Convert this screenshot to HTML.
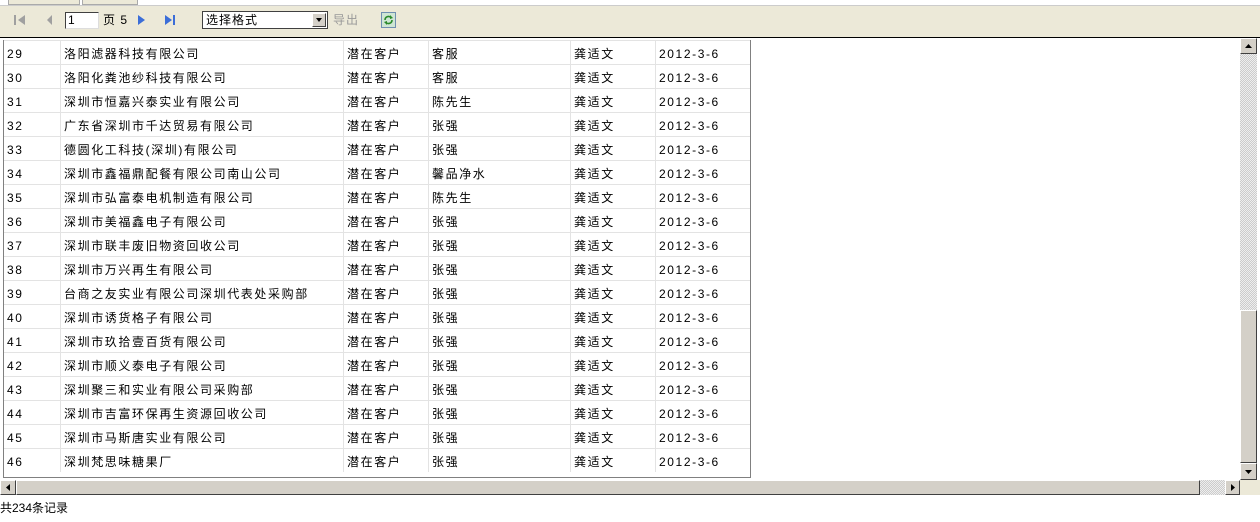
<!DOCTYPE html>
<html><head><meta charset="utf-8"><style>
*{margin:0;padding:0;box-sizing:border-box}
body{width:1260px;height:522px;background:#fff;position:relative;overflow:hidden;font-family:"Liberation Sans","Noto Sans CJK SC","WenQuanYi Zen Hei",sans-serif;font-size:12px;color:#000}
.abs{position:absolute}
#tb{left:0;top:5px;width:1260px;height:33px;background:#ece9d8;border-bottom:1px solid #000;border-top:1px solid #ccc}
.tab{top:0;height:5px;background:#ece9d8;border:1px solid #aaa;border-top:none}
#grid{left:3px;top:40px;width:748px;height:438px;border-left:1px solid #808080;border-right:1px solid #808080;border-bottom:1px solid #808080}
.row{position:absolute;left:0;height:24px;width:746px;border-top:1px solid #e3e3e3}
.c{position:absolute;top:0;height:23px;line-height:27px;padding-left:3px;border-left:1px solid #e3e3e3;white-space:nowrap;letter-spacing:1.6px}
.chk{background-color:#eee;background-image:linear-gradient(45deg,#ccc 25%,transparent 25%,transparent 75%,#ccc 75%),linear-gradient(45deg,#ccc 25%,transparent 25%,transparent 75%,#ccc 75%);background-size:2px 2px;background-position:0 0,1px 1px}
.btn{background:#d4d0c8;border:1px solid;border-color:#fff #404040 #404040 #fff}
</style></head><body>
<div class="abs tab" style="left:8px;width:72px"></div>
<div class="abs tab" style="left:82px;width:56px"></div>
<div id="tb" class="abs"></div>
<svg class="abs" style="left:12px;top:12px" width="180" height="16">
<g fill="#a0a0a0"><rect x="2" y="3" width="2" height="10"/><polygon points="13,3 6,8 13,13"/><polygon points="40,3 35,8 40,13"/></g>
<g fill="#3c6ed8"><polygon points="126,3 133,8 126,13"/><polygon points="153,3 160,8 153,13"/><rect x="161" y="3" width="2" height="10"/></g>
</svg>
<div class="abs" style="left:65px;top:12px;width:34px;height:17px;background:#fff;border:1px solid #7f9db9;border-color:#404040 #ddd #ddd #404040;font-size:12px;line-height:15px;padding-left:2px">1</div>
<div class="abs" style="left:103px;top:12px;line-height:16px;letter-spacing:1px">页 5</div>
<div class="abs" style="left:202px;top:11px;width:126px;height:18px;background:#fff;border:1px solid #404040;line-height:16px;padding-left:3px;letter-spacing:1px">选择格式</div>
<div class="abs btn" style="left:312px;top:13px;width:14px;height:14px"><svg width="12" height="12" style="display:block"><polygon points="3,4 9,4 6,8" fill="#000"/></svg></div>
<div class="abs" style="left:333px;top:12px;line-height:16px;color:#999;letter-spacing:1px">导出</div>
<svg class="abs" style="left:381px;top:12px" width="15" height="16"><rect x="0.5" y="0.5" width="14" height="15" fill="#cfe6d4" stroke="#6f8fb0"/><path d="M4 8a3.5 3.5 0 0 1 6-2.5M11 8a3.5 3.5 0 0 1-6 2.5" stroke="#2a8a2a" stroke-width="1.6" fill="none"/><polygon points="9,3 12,6 9,7" fill="#2a8a2a"/><polygon points="6,13 3,10 6,9" fill="#2a8a2a"/></svg>
<div id="grid" class="abs">
<div id="rows"></div>
</div>
<div class="abs chk" style="left:1240px;top:38px;width:17px;height:442px"></div>
<div class="abs btn" style="left:1240px;top:38px;width:17px;height:16px"><svg width="15" height="14" style="display:block"><polygon points="4,9 11,9 7.5,5" fill="#000"/></svg></div>
<div class="abs btn" style="left:1240px;top:310px;width:17px;height:153px"></div>
<div class="abs btn" style="left:1240px;top:463px;width:17px;height:17px"><svg width="15" height="15" style="display:block"><polygon points="4,6 11,6 7.5,10" fill="#000"/></svg></div>
<div class="abs chk" style="left:0;top:480px;width:1240px;height:15px"></div>
<div class="abs btn" style="left:0;top:480px;width:16px;height:15px"><svg width="14" height="13" style="display:block"><polygon points="9,3 9,10 5,6.5" fill="#000"/></svg></div>
<div class="abs btn" style="left:16px;top:480px;width:1184px;height:15px"></div>
<div class="abs btn" style="left:1225px;top:480px;width:15px;height:15px"><svg width="13" height="13" style="display:block"><polygon points="5,3 5,10 9,6.5" fill="#000"/></svg></div>
<div class="abs" style="left:1240px;top:480px;width:20px;height:15px;background:#ece9d8"></div>
<div class="abs" style="left:0;top:500px;line-height:16px">共234条记录</div>
<script>
var d=[["洛阳滤器科技有限公司","客服"],["洛阳化粪池纱科技有限公司","客服"],["深圳市恒嘉兴泰实业有限公司","陈先生"],["广东省深圳市千达贸易有限公司","张强"],["德圆化工科技(深圳)有限公司","张强"],["深圳市鑫福鼎配餐有限公司南山公司","馨品净水"],["深圳市弘富泰电机制造有限公司","陈先生"],["深圳市美福鑫电子有限公司","张强"],["深圳市联丰废旧物资回收公司","张强"],["深圳市万兴再生有限公司","张强"],["台商之友实业有限公司深圳代表处采购部","张强"],["深圳市诱货格子有限公司","张强"],["深圳市玖拾壹百货有限公司","张强"],["深圳市顺义泰电子有限公司","张强"],["深圳聚三和实业有限公司采购部","张强"],["深圳市吉富环保再生资源回收公司","张强"],["深圳市马斯唐实业有限公司","张强"],["深圳梵思味糖果厂","张强"]];
var cols=[[0,56],[56,283],[339,85],[424,142],[566,85],[651,95]];
var h="";
d.forEach(function(r,i){var v=[29+i,r[0],"潜在客户",r[1],"龚适文","2012-3-6"];
h+='<div class="row" style="top:'+(i*24)+'px">';
cols.forEach(function(c,j){h+='<div class="c" style="left:'+c[0]+'px;width:'+c[1]+'px;'+(j==0?'border-left:none;':'')+'">'+v[j]+'</div>';});
h+='</div>';});
document.getElementById('rows').innerHTML=h;
</script>
</body></html>
